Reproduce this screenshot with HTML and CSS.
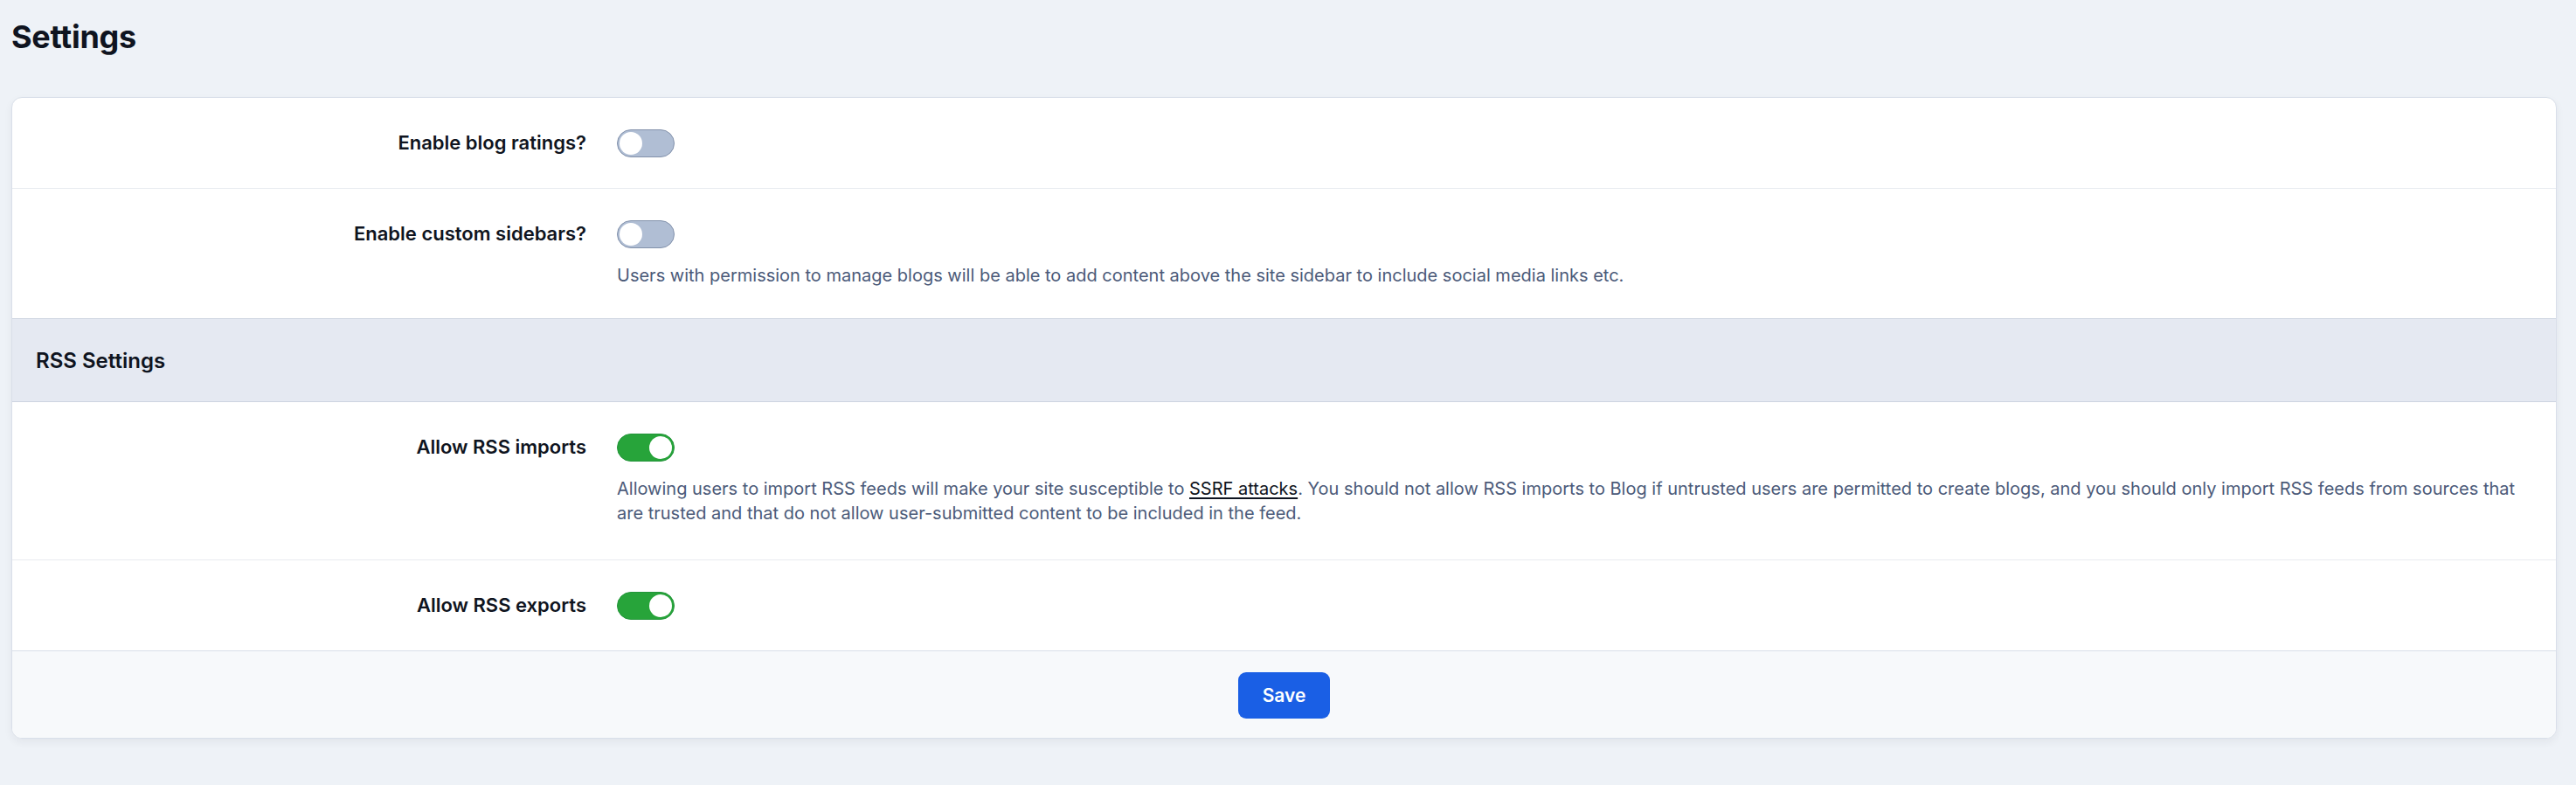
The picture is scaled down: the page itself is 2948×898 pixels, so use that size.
FILE: index.html
```html
<!DOCTYPE html>
<html lang="en">
<head>
  <meta charset="UTF-8" />
  <meta name="viewport" content="width=device-width, initial-scale=1.0"/>
  <title>Settings</title>
  <link rel="stylesheet" href="styles.css">
</head>
<body>

  <h1 class="page-title">Settings</h1>

  <form class="settings-card">
    <div class="setting-row">
      <label class="setting-label">Enable blog ratings?</label>
      <div class="setting-control">
        <span class="toggle"></span>
      </div>
    </div>

    <div class="setting-row">
      <label class="setting-label">Enable custom sidebars?</label>
      <div class="setting-control">
        <span class="toggle"></span>
        <p class="help">Users with permission to manage blogs will be able to add content above the site sidebar to include social media links etc.</p>
      </div>
    </div>

    <div class="section-head">RSS Settings</div>

    <div class="setting-row setting-row-tall">
      <label class="setting-label">Allow RSS imports</label>
      <div class="setting-control">
        <span class="toggle on"></span>
        <p class="help">Allowing users to import RSS feeds will make your site susceptible to <a href="#">SSRF attacks</a>. You should not allow RSS imports to Blog if untrusted users are permitted to create blogs, and you should only import RSS feeds from sources that are trusted and that do not allow user-submitted content to be included in the feed.</p>
      </div>
    </div>

    <div class="setting-row">
      <label class="setting-label">Allow RSS exports</label>
      <div class="setting-control">
        <span class="toggle on"></span>
      </div>
    </div>

    <div class="card-footer">
      <button type="button" class="btn-save">Save</button>
    </div>
  </form>

</body>
</html>
```

FILE: styles.css
```css
html, body {
  margin: 0;
  padding: 0;
}
body {
  background: #eef2f7;
  font-family: Inter, "Noto Sans", Arial, sans-serif;
  color: #0f1420;
  padding: 20px 22px 40px 13px;
}
.page-title {
  margin: 0 0 47px;
  font-size: 36px;
  line-height: 44px;
  font-weight: 700;
  letter-spacing: -0.3px;
}
.settings-card {
  background: #fff;
  border: 1px solid #d9dfe9;
  border-radius: 12px;
  box-shadow: 0 4px 10px rgba(30, 41, 59, 0.06);
  overflow: hidden;
}
.setting-row {
  display: grid;
  grid-template-columns: 657px 1fr;
  column-gap: 35px;
  padding: 35px 34px 35px 0;
  border-top: 1px solid #e8ebf0;
}
.setting-row:first-child {
  border-top: none;
}
.setting-row-tall {
  padding-bottom: 39px;
}
.setting-label {
  text-align: right;
  font-size: 22px;
  line-height: 33px;
  font-weight: 600;
  color: #0f1420;
}
.setting-control {
  display: flex;
  flex-direction: column;
  align-items: flex-start;
}
.toggle {
  position: relative;
  width: 64px;
  height: 30px;
  border: 1.5px solid #8291ab;
  border-radius: 17px;
  background: #b0bed4;
  margin-top: 1px;
}
.toggle::after {
  content: "";
  position: absolute;
  top: 2px;
  left: 2px;
  width: 26px;
  height: 26px;
  border-radius: 50%;
  background: #fff;
}
.toggle.on {
  background: #27a43a;
  border-color: #23953a;
}
.toggle.on::after {
  left: auto;
  right: 2px;
}
.help {
  margin: 17px 0 0;
  font-size: 20px;
  line-height: 28px;
  color: #4b5a79;
}
.help a {
  color: #0f1420;
  text-decoration: underline;
  text-underline-offset: 3px;
  text-decoration-thickness: 2px;
}
.section-head {
  background: #e5e9f2;
  border-top: 1px solid #cdd4e0;
  border-bottom: 1px solid #cdd4e0;
  padding: 0 27px;
  height: 94px;
  display: flex;
  align-items: center;
  font-size: 24px;
  font-weight: 600;
  color: #0f1420;
}
.section-head + .setting-row {
  border-top: none;
}
.card-footer {
  background: #f7f9fb;
  border-top: 1px solid #d9dfe9;
  display: flex;
  justify-content: center;
  padding: 24px 0 22px;
}
.btn-save {
  font-family: inherit;
  font-size: 21px;
  font-weight: 600;
  line-height: 25px;
  color: #fff;
  background: #1a5fe5;
  border: none;
  border-radius: 9px;
  padding: 14px 28px;
  cursor: pointer;
}
```
